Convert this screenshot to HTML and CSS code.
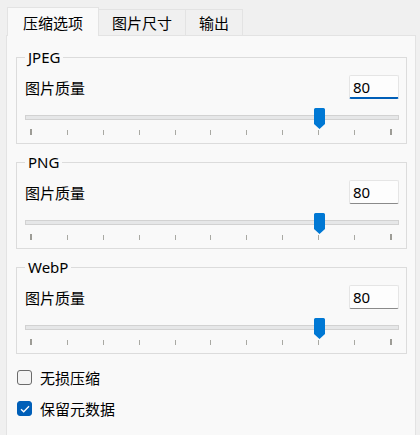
FILE: index.html
```html
<!DOCTYPE html>
<html lang="zh-CN">
<head>
    <meta charset="UTF-8">
    <meta name="viewport" content="width=device-width, initial-scale=1.0">
    <title>压缩选项</title>
    <link rel="stylesheet" href="styles.css">
</head>
<body>
    <div class="window">
        <div class="tabs">
            <div class="tab active">压缩选项</div>
            <div class="tab">图片尺寸</div>
            <div class="tab">输出</div>
        </div>
        <div class="pane">
            <fieldset class="group">
                <legend>JPEG</legend>
                <div class="row">
                    <span class="label">图片质量</span>
                    <input class="spin focused" type="text" value="80">
                </div>
                <div class="slider" style="--value: 80">
                    <div class="track"></div>
                    <svg class="thumb" width="11" height="21" viewBox="0 0 11 21"><path d="M1.5 0H9.5A1.5 1.5 0 0 1 11 1.5V16L5.5 21L0 16V1.5A1.5 1.5 0 0 1 1.5 0Z"/></svg>
                </div>
                <div class="ticks">
                    <span class="tick end"></span><span class="tick"></span><span class="tick"></span><span class="tick"></span><span class="tick"></span><span class="tick"></span><span class="tick"></span><span class="tick"></span><span class="tick"></span><span class="tick"></span><span class="tick end"></span>
                </div>
            </fieldset>

            <fieldset class="group">
                <legend>PNG</legend>
                <div class="row">
                    <span class="label">图片质量</span>
                    <input class="spin" type="text" value="80">
                </div>
                <div class="slider" style="--value: 80">
                    <div class="track"></div>
                    <svg class="thumb" width="11" height="21" viewBox="0 0 11 21"><path d="M1.5 0H9.5A1.5 1.5 0 0 1 11 1.5V16L5.5 21L0 16V1.5A1.5 1.5 0 0 1 1.5 0Z"/></svg>
                </div>
                <div class="ticks">
                    <span class="tick end"></span><span class="tick"></span><span class="tick"></span><span class="tick"></span><span class="tick"></span><span class="tick"></span><span class="tick"></span><span class="tick"></span><span class="tick"></span><span class="tick"></span><span class="tick end"></span>
                </div>
            </fieldset>

            <fieldset class="group">
                <legend>WebP</legend>
                <div class="row">
                    <span class="label">图片质量</span>
                    <input class="spin" type="text" value="80">
                </div>
                <div class="slider" style="--value: 80">
                    <div class="track"></div>
                    <svg class="thumb" width="11" height="21" viewBox="0 0 11 21"><path d="M1.5 0H9.5A1.5 1.5 0 0 1 11 1.5V16L5.5 21L0 16V1.5A1.5 1.5 0 0 1 1.5 0Z"/></svg>
                </div>
                <div class="ticks">
                    <span class="tick end"></span><span class="tick"></span><span class="tick"></span><span class="tick"></span><span class="tick"></span><span class="tick"></span><span class="tick"></span><span class="tick"></span><span class="tick"></span><span class="tick"></span><span class="tick end"></span>
                </div>
            </fieldset>

            <label class="check">
                <span class="box"></span>
                无损压缩
            </label>
            <label class="check">
                <span class="box checked">
                    <svg width="10" height="8" viewBox="0 0 10 8"><path d="M1 4.2L3.7 6.8L9 1.3"/></svg>
                </span>
                保留元数据
            </label>
        </div>
    </div>
</body>
</html>
```

FILE: styles.css
```css
body {
    margin: 0;
    background-color: #f0f0f0;
    font-family: "Noto Sans", "Noto Sans CJK SC", sans-serif;
    font-size: 15px;
    color: #000;
}
.window {
    width: 420px;
    height: 435px;
    overflow: hidden;
}
.tabs {
    display: flex;
    align-items: flex-end;
    padding: 7px 0 0 7px;
    height: 28px;
}
.tab {
    height: 26px;
    box-sizing: border-box;
    padding: 3px 13px 0;
    line-height: 20px;
    border: 1px solid #e3e3e3;
    border-bottom: none;
    border-left: none;
    background-color: #f0f0f0;
}
.tab.active {
    position: relative;
    z-index: 1;
    height: 29px;
    margin-bottom: -1px;
    padding: 5px 15px 0;
    border-left: 1px solid #e3e3e3;
    background-color: #f9f9f9;
}
.pane {
    margin-left: 6px;
    width: 410px;
    height: 420px;
    box-sizing: border-box;
    padding: 11px 8px 0 9px;
    border: 1px solid #e3e3e3;
    background-color: #f9f9f9;
}
.group {
    margin: 0 0 8px;
    padding: 8px 7px 8px 8px;
    min-inline-size: 0;
    border: 1px solid #dcdcdc;
}
.group legend {
    padding: 0 3px;
    line-height: 20px;
}
.row {
    display: flex;
    justify-content: space-between;
    align-items: center;
    height: 24px;
}
.spin {
    width: 50px;
    height: 24px;
    box-sizing: border-box;
    padding: 0 3px;
    border: 1px solid #e5e5e5;
    border-bottom: 1px solid #8a8a8a;
    border-radius: 2px;
    background-color: #fdfdfd;
    font: inherit;
    color: #000;
    outline: none;
}
.spin.focused {
    border-bottom: 2px solid #005fb8;
}
.slider {
    position: relative;
    height: 21px;
    margin-top: 9px;
}
.track {
    position: relative;
    top: 7px;
    height: 5px;
    box-sizing: border-box;
    border: 1px solid #d2d2d2;
    background-color: #e6e7e8;
}
.thumb {
    position: absolute;
    top: 0;
    left: calc((100% - 13px) * var(--value) / 100);
    fill: #0078d4;
}
.ticks {
    display: flex;
    justify-content: space-between;
    align-items: center;
    height: 6px;
    padding: 0 7px 0 5px;
}
.tick {
    width: 1px;
    height: 5px;
    background-color: #a9a9a3;
}
.tick.end {
    width: 2px;
    height: 6px;
    background-color: #9d9c96;
}
.check {
    display: flex;
    align-items: center;
    gap: 8px;
    height: 31px;
    padding-left: 1px;
    line-height: 20px;
}
.check:first-of-type {
    margin-top: 2px;
}
.box {
    display: flex;
    align-items: center;
    justify-content: center;
    width: 15px;
    height: 15px;
    box-sizing: border-box;
    border: 1px solid #6b6b6b;
    border-radius: 3px;
    background-color: #f4f4f4;
}
.box.checked {
    border-color: #005fb8;
    background-color: #005fb8;
}
.box svg path {
    fill: none;
    stroke: #fff;
    stroke-width: 1.3;
}
```
